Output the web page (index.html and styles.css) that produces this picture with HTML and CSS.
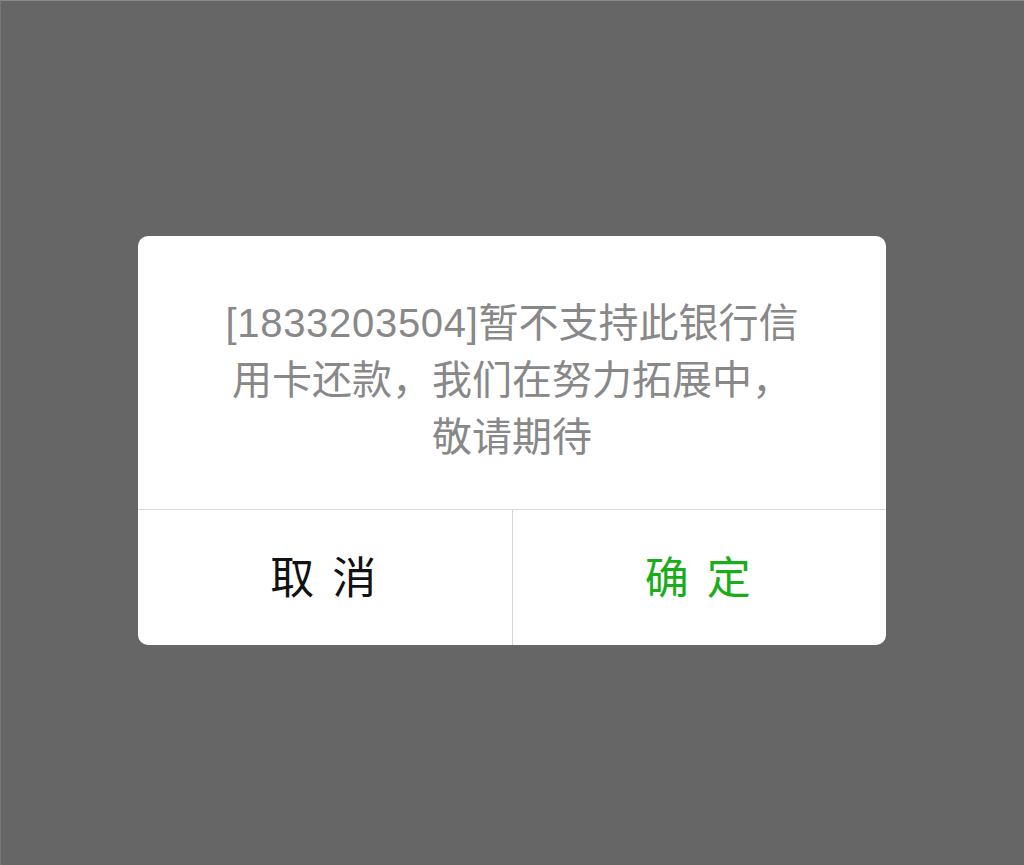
FILE: index.html
```html
<!DOCTYPE html>
<html lang="zh-CN">

<head>
    <meta charset="UTF-8">
    <meta name="viewport" content="width=device-width, initial-scale=1.0">
    <title>提示</title>
    <link rel="stylesheet" href="styles.css">
</head>

<body>
    <div class="mask">
        <div class="dialog">
            <p class="msg"><span class="code">[1833203504]</span>暂不支持此银行信用卡还款，我们在努力拓展中，敬请期待</p>
            <div class="actions">
                <button type="button" class="cancel">取 消</button>
                <button type="button" class="ok">确 定</button>
            </div>
        </div>
    </div>
</body>

</html>
```

FILE: styles.css
```css
* {
    box-sizing: border-box;
}

body {
    margin: 0;
    background-color: #666;
    font-family: "Liberation Sans", "Noto Sans CJK SC", sans-serif;
}

.mask {
    height: 865px;
    padding-top: 236px;
    border-top: 1px solid #8a8a8a;
    border-left: 1px solid #777;
}

.dialog {
    width: 748px;
    margin: -1px auto 0 137px;
    background-color: #fff;
    border-radius: 10px;
    overflow: hidden;
}

.msg {
    margin: 0;
    padding: 59px 78px 43px;
    font-size: 40px;
    line-height: 57px;
    color: #888;
    text-align: center;
}

.code {
    letter-spacing: .7px;
}

.actions {
    display: flex;
    border-top: 1px solid #d6d6d6;
}

.actions button {
    flex: 1;
    height: 135px;
    padding: 0 0 6px;
    border: none;
    background: none;
    font-family: inherit;
    font-size: 44px;
    letter-spacing: 3px;
    cursor: pointer;
}

.cancel {
    color: #111;
    border-right: 1px solid #d6d6d6 !important;
}

.ok {
    color: #1aad19;
}
```
